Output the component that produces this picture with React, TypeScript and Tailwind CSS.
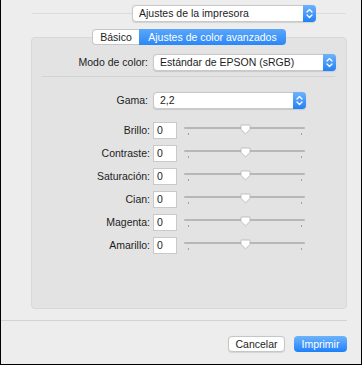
import React from 'react';

const sliders = ['Brillo', 'Contraste', 'Saturación', 'Cian', 'Magenta', 'Amarillo'];

const Stepper: React.FC = () => (
    <div className="w-[13px] self-stretch -my-px -mr-px rounded-r-[4px] bg-gradient-to-b from-[#6db3fb] to-[#1f80f6] flex items-center justify-center">
        <svg width="7" height="11" viewBox="0 0 7 11" fill="none" stroke="white" strokeWidth="1.3" strokeLinecap="round" strokeLinejoin="round">
            <path d="M1 4 L3.5 1.5 L6 4" />
            <path d="M1 7 L3.5 9.5 L6 7" />
        </svg>
    </div>
);

const Popup: React.FC<{ label: string; width: string }> = ({ label, width }) => (
    <div className={`${width} h-[17px] flex items-center bg-white border border-[#c9c9c9] rounded-[4px] shadow-[0_0.5px_1px_rgba(0,0,0,0.12)]`}>
        <span className="flex-1 pl-[6px] leading-none text-[#1d1d1d]">{label}</span>
        <Stepper />
    </div>
);

const Slider: React.FC = () => (
    <div className="relative w-[121px] h-[17px] ml-[7px]">
        <div className="absolute left-0 right-0 top-[5px] h-[2px] bg-[#b7b7b7] rounded-full" />
        <div className="absolute left-[4px] top-[11px] w-px h-[2px] bg-[#a0a0a0]" />
        <div className="absolute left-[117px] top-[11px] w-px h-[2px] bg-[#a0a0a0]" />
        <svg className="absolute left-[56px] top-[2px]" width="11" height="11" viewBox="0 0 11 11">
            <path d="M1.5 1 H9.5 Q10 1 10 1.5 V5.5 L5.5 9.8 L1 5.5 V1.5 Q1 1 1.5 1 Z" fill="white" stroke="#b3b3b3" strokeWidth="0.8" />
        </svg>
    </div>
);

export default function App() {
    return (
        <div className="w-[362px] h-[365px] bg-[#ededed] border-l border-r border-b border-black flex flex-col text-[10.5px] text-[#1d1d1d] font-['Liberation_Sans',Arial,sans-serif] overflow-hidden">
            {/* printer settings popup over a separator */}
            <div className="mt-[5px] h-[17px] flex items-center pl-[31px] pr-[15px]">
                <div className="w-[100px] h-px bg-[#dcdcdc]" />
                <Popup label="Ajustes de la impresora" width="w-[184px]" />
                <div className="flex-1 h-px bg-[#dcdcdc]" />
            </div>

            {/* group box */}
            <div className="mt-[15px] ml-[30px] w-[316px] h-[272px] bg-[#e3e3e3] border border-[#d8d8d8] rounded-[4px] flex flex-col">
                <div className="-mt-[9px] h-[16px] flex justify-center">
                    <div className="w-[47px] flex items-center justify-center bg-white border border-[#c6c6c6] border-r-0 rounded-l-[4px] leading-none">Básico</div>
                    <div className="w-[147px] flex items-center justify-center bg-gradient-to-b from-[#5aa6fa] to-[#2a87f7] text-white rounded-r-[4px] leading-none">Ajustes de color avanzados</div>
                </div>

                <div className="mt-[9px] flex items-center">
                    <span className="w-[116px] text-right leading-none">Modo de color:</span>
                    <div className="ml-[5px]">
                        <Popup label="Estándar de EPSON (sRGB)" width="w-[183px]" />
                    </div>
                </div>

                <div className="mt-[5px] ml-[10px] mr-[11px] h-px bg-[#d2d2d2]" />

                <div className="mt-[15px] flex items-center">
                    <span className="w-[116px] text-right leading-none">Gama:</span>
                    <div className="ml-[5px]">
                        <Popup label="2,2" width="w-[153px]" />
                    </div>
                </div>

                <div className="mt-[13px] flex flex-col gap-[6px]">
                    {sliders.map((name) => (
                        <div key={name} className="flex items-center h-[17px]">
                            <span className="w-[118px] text-right leading-none">{name}:</span>
                            <div className="ml-[3px] w-[24px] h-[17px] bg-white border border-[#c9c9c9] flex items-center pl-[3px] leading-none">0</div>
                            <Slider />
                        </div>
                    ))}
                </div>
            </div>

            <div className="mt-[11px] mr-[14px] h-px bg-[#d3d3d3]" />

            <div className="mt-[15px] flex justify-end pr-[14px] gap-[9px]">
                <div className="w-[57px] h-[16px] bg-white border border-[#c6c6c6] rounded-[4px] flex items-center justify-center leading-none shadow-[0_0.5px_1px_rgba(0,0,0,0.1)]">Cancelar</div>
                <div className="w-[53px] h-[16px] bg-gradient-to-b from-[#6cb3fa] to-[#1a7ffb] rounded-[4px] flex items-center justify-center leading-none text-white">Imprimir</div>
            </div>
        </div>
    );
}
